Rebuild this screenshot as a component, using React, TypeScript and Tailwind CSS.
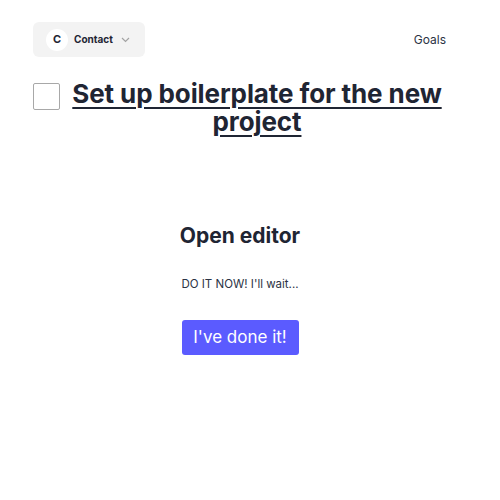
import React from "react";

export default function App() {
  return (
    <div className="w-[500px] h-[500px] bg-white text-[#1f2533]" style={{ fontFamily: "Inter, 'Noto Sans', sans-serif" }}>
      <div className="flex items-center justify-between pl-[33px] pr-[54px] pt-[22px]">
        <div className="flex items-center h-[35px] w-[112px] rounded-md bg-[#f3f3f3] pl-[13px]">
          <div className="w-[22px] h-[22px] rounded-full bg-white flex items-center justify-center text-[11px] font-bold">C</div>
          <span className="ml-[6px] text-[10px] font-bold">Contact</span>
          <svg className="ml-[8px]" width="9" height="6" viewBox="0 0 9 6" fill="none">
            <path d="M1 1l3.5 3.5L8 1" stroke="#a3a3a3" strokeWidth="1.2" />
          </svg>
        </div>
        <span className="text-[12px] text-[#2b3344]">Goals</span>
      </div>
      <div className="flex items-start pl-[33px] pr-[57px] mt-[25px]">
        <div className="w-[27px] h-[27px] shrink-0 border border-[#a8a8a8] rounded-[2px] mt-[1px]"></div>
        <h1 className="flex-1 ml-[11px] -mt-[2px] text-center text-[26px] font-bold leading-[28px] tracking-[-0.1px] underline decoration-[2px] underline-offset-[4px]">
          Set up boilerplate for the new project
        </h1>
      </div>
      <div className="flex flex-col items-center pr-[20px] mt-[86px]">
        <h2 className="text-[21px] font-bold leading-[28px]">Open editor</h2>
        <p className="mt-[26px] text-[11.5px] text-[#2b3344]">DO IT NOW! I'll wait...</p>
        <button className="mt-[27px] h-[35px] w-[117px] rounded-[3px] bg-[#5b5bff] text-white text-[17px]">I've done it!</button>
      </div>
    </div>
  );
}
